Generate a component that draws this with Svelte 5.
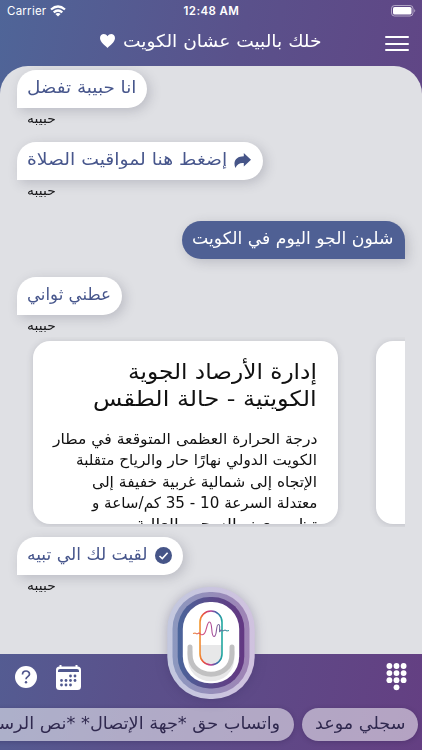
<script lang="ts">
	type Line = { text: string; width: number };
	type Message = Line & { icon?: 'share' | 'check' };

	const sender = 'حبيبه';
	const greetings: Message[] = [
		{ text: 'انا حبيبة تفضل', width: 109 },
		{ text: 'إضغط هنا لمواقيت الصلاة', width: 200, icon: 'share' }
	];
	const question: Line = { text: 'شلون الجو اليوم في الكويت', width: 202 };
	const waiting: Message = { text: 'عطني ثواني', width: 84 };
	const found: Message = { text: 'لقيت لك الي تبيه', width: 121, icon: 'check' };

	const title: Line[] = [
		{ text: 'إدارة الأرصاد الجوية', width: 189 },
		{ text: 'الكويتية - حالة الطقس', width: 224 }
	];
	const forecast: Line[] = [
		{ text: 'درجة الحرارة العظمى المتوقعة في مطار', width: 264 },
		{ text: 'الكويت الدولي نهارًا حار والرياح متقلبة', width: 241 },
		{ text: 'الإتجاه إلى شمالية غربية خفيفة إلى', width: 225 },
		{ text: 'معتدلة السرعة 10 - 35 كم/ساعة و', width: 225 },
		{ text: 'تظهر بعض السحب العالية', width: 181 }
	];
	const suggestions: Line[] = [
		{ text: 'سجلي موعد', width: 90 },
		{ text: 'واتساب حق *جهة الإتصال* *نص الرسالة*', width: 310 }
	];

	const keypad = [0, 1, 2, 3, 4, 5, 6, 7, 8].map((i) => [3.4 + (i % 3) * 7.1, 3 + Math.floor(i / 3) * 7.1]).concat([[10.5, 24.3]]);
	const days = [[14.5, 11], [19, 11], [5.5, 15.5], [10, 15.5], [14.5, 15.5], [19, 15.5], [5.5, 20], [10, 20], [14.5, 20]];

	// stretch a line to its column width, anchored on the right edge
	function fit(el: HTMLElement, width: number) {
		const natural = el.offsetWidth;
		el.style.transform = `scaleX(${width / natural})`;
		el.style.marginLeft = `${width - natural}px`;
	}
</script>

{#snippet bubble(msg: Message)}
	<div class="message">
		<div class="bubble">
			{#if msg.icon === 'share'}
				<svg class="share" viewBox="0 0 17 15" width="17" height="15">
					<path d="M9.8 0L17 6.7L9.8 13.4V10C6 9.6 3.2 10.8 1.4 15C-1.6 7.5 3 3.4 9.8 3.3Z" />
				</svg>
			{:else if msg.icon === 'check'}
				<svg class="check" viewBox="0 0 17 17" width="17" height="17">
					<circle cx="8.5" cy="8.5" r="8.5" />
					<path d="M4.5 9L7.3 11.6L12.6 5.7" fill="none" stroke="#fff" stroke-width="1.6" />
				</svg>
			{/if}
			<span class="line" use:fit={msg.width}>{msg.text}</span>
		</div>
		<div class="sender"><span class="line" use:fit={29}>{sender}</span></div>
	</div>
{/snippet}

<div class="phone">
	<div class="status">
		<div class="carrier">
			Carrier
			<svg viewBox="0 0 16 12" width="16" height="12" fill="none" stroke="#fff" stroke-width="2.3">
				<path d="M1 4.5Q8 -1.5 15 4.5M3.7 7.4Q8 3.6 12.3 7.4" />
				<path d="M8 11.6L5.4 9Q8 7 10.6 9Z" fill="#fff" stroke="none" />
			</svg>
		</div>
		<div class="time">12:48 AM</div>
		<svg class="battery" viewBox="0 0 25 12" width="25" height="12">
			<rect x=".5" y=".5" width="21.5" height="10.5" rx="3" fill="none" stroke="#fff" stroke-opacity=".5" />
			<rect x="2" y="2" width="18.5" height="7.5" rx="1.6" fill="#fff" />
			<path d="M23.3 4Q25.2 5.8 23.3 7.5Z" fill="#fff" fill-opacity=".6" />
		</svg>
	</div>

	<header>
		<h1>
			<span class="line" use:fit={199}>خلك بالبيت عشان الكويت</span>
			<svg viewBox="0 0 15 14" width="15" height="14">
				<path d="M7.5 14C5.5 12 0 8.2 0 4.1C0-.2 5.3-1.4 7.5 2.2C9.7-1.4 15-.2 15 4.1C15 8.2 9.5 12 7.5 14Z" fill="#fff" />
			</svg>
		</h1>
		<button class="menu" aria-label="القائمة"><i></i><i></i><i></i></button>
	</header>

	<main>
		{#each greetings as msg}
			{@render bubble(msg)}
		{/each}
		<div class="bubble mine"><span class="line" use:fit={question.width}>{question.text}</span></div>
		{@render bubble(waiting)}

		<div class="cards">
			<article>
				<h2>{#each title as line}<span class="line" use:fit={line.width}>{line.text}</span>{/each}</h2>
				<p>{#each forecast as line}<span class="line" use:fit={line.width}>{line.text}</span>{/each}</p>
			</article>
			<article></article>
		</div>

		{@render bubble(found)}
	</main>

	<footer>
		<div class="tools">
			<svg viewBox="0 0 22 22" width="22" height="22">
				<circle cx="11" cy="11" r="11" fill="#fff" />
				<path d="M7.5 8.5C7.5 3.8 14.6 4 14.5 8.2C14.4 10.7 11 10.5 11 13.2" fill="none" stroke="#4f558c" stroke-width="1.7" />
				<circle cx="11" cy="16.2" r="1.2" fill="#4f558c" />
			</svg>
			<svg viewBox="0 0 25 25" width="25" height="25">
				<rect y="1.5" width="25" height="23.5" rx="3.5" fill="#fff" />
				<path d="M4.5 0V3M20.5 0V3" stroke="#fff" stroke-width="2" />
				<path d="M2 7V5.5Q2 4 4 4H21Q23 4 23 5.5V7Z" fill="#50588f" />
				{#each days as [x, y]}
					<circle cx={x} cy={y} r="1.4" fill="#50588f" />
				{/each}
			</svg>
			<svg class="keypad" viewBox="0 0 21 28" width="21" height="28">
				{#each keypad as [x, y]}
					<circle cx={x} cy={y} r="2.9" fill="#fff" />
				{/each}
			</svg>
		</div>
		<div class="suggestions">
			{#each suggestions as item}
				<button><span class="line" use:fit={item.width}>{item.text}</span></button>
			{/each}
		</div>
	</footer>

	<button class="mic" aria-label="تحدث">
		<svg viewBox="0 0 88 112" width="88" height="112">
			<defs>
				<linearGradient id="ring" x1="0" x2="1">
					<stop offset="0" stop-color="#4a659b" />
					<stop offset=".5" stop-color="#5a4b8b" />
					<stop offset="1" stop-color="#633782" />
				</linearGradient>
				<linearGradient id="halo" x1="0" x2="1">
					<stop offset="0" stop-color="#c3c8df" />
					<stop offset="1" stop-color="#d0c2df" />
				</linearGradient>
				<linearGradient id="halo2" x1="0" x2="1">
					<stop offset="0" stop-color="#8c98bf" />
					<stop offset="1" stop-color="#9f83b5" />
				</linearGradient>
				<linearGradient id="rainbow" gradientUnits="userSpaceOnUse" x1="32" y1="0" x2="55" y2="0">
					<stop offset="0" stop-color="#f3a02c" />
					<stop offset=".2" stop-color="#e94b3c" />
					<stop offset=".5" stop-color="#ba3f93" />
					<stop offset=".75" stop-color="#455fac" />
					<stop offset="1" stop-color="#20a99f" />
				</linearGradient>
				<linearGradient id="wave" gradientUnits="userSpaceOnUse" x1="26" y1="0" x2="62" y2="0">
					<stop offset="0" stop-color="#ef8b35" />
					<stop offset=".25" stop-color="#d84c78" />
					<stop offset=".55" stop-color="#a64b9a" />
					<stop offset="1" stop-color="#259b9d" />
				</linearGradient>
			</defs>
			<rect x=".3" y="0" width="87.4" height="112" rx="42" fill="url(#halo)" />
			<rect x="5.5" y="5" width="77" height="102" rx="37" fill="url(#halo2)" />
			<rect x="10.7" y="10" width="66.6" height="91.5" rx="32" fill="url(#ring)" />
			<rect x="15.8" y="15" width="56.4" height="81.3" rx="27" fill="#fff" />
			<path d="M23 65V70C23 99 65 99 65 70V65" fill="none" stroke="#e7e7e8" stroke-width="5" stroke-linecap="round" />
			<path d="M23 60V67C23 94 65 94 65 67V60" fill="none" stroke="#c1c1c2" stroke-width="5" stroke-linecap="round" />
			<path d="M33 58H55V67Q55 78 44 78T33 67Z" fill="#e8e8e9" />
			<rect x="33" y="24" width="22" height="54" rx="11" fill="none" stroke="url(#rainbow)" stroke-width="1.6" />
			<path d="M26 46.5L28 46L30 47L32 46L34 47.5C40 50 39 35 42.5 35S43.5 49.5 47 49.5S48.5 37.5 51.5 37.5S50.5 49 54 43L56 44L58 43L60 44L62 43.5" fill="none" stroke="url(#wave)" stroke-width="1.1" />
		</svg>
	</button>
</div>

<style>
	.phone {
		position: relative;
		display: flex;
		flex-direction: column;
		width: 422px;
		height: 750px;
		overflow: hidden;
		background: linear-gradient(100deg, #4f6598 0%, #5a518b 45%, #643f82 100%);
		font-family: 'DejaVu Sans', sans-serif;
		direction: ltr;
	}

	button {
		border: 0;
		padding: 0;
		background: none;
		font: inherit;
	}

	svg { display: block; flex-shrink: 0; }

	.line {
		display: block;
		flex-shrink: 0;
		width: max-content;
		direction: rtl;
		transform-origin: right;
		white-space: nowrap;
	}

	.status {
		display: grid;
		grid-template-columns: 1fr auto 1fr;
		align-items: center;
		height: 22px;
		padding: 0 6px 0 7px;
		box-sizing: border-box;
		color: #fff;
		font: 11.5px Inter, sans-serif;
	}

	.carrier {
		display: flex;
		align-items: center;
		gap: 4px;
		letter-spacing: 0.25px;
	}

	.time {
		font-weight: 600;
		letter-spacing: 0.4px;
	}

	.battery { justify-self: end; }

	header {
		display: flex;
		justify-content: space-between;
		height: 44px;
		padding: 0 13px 0 100px;
	}

	h1 {
		display: flex;
		flex-direction: row-reverse;
		align-items: center;
		justify-content: space-between;
		width: 222px;
		height: 38px;
		margin: 0;
		color: #fff;
		font-size: 17.5px;
		font-weight: 400;
	}

	.menu {
		display: flex;
		flex-direction: column;
		justify-content: space-between;
		width: 24px;
		height: 15px;
		margin-top: 14px;
	}

	.menu i {
		height: 2px;
		border-radius: 1px;
		background: #fff;
	}

	main {
		display: flex;
		flex-direction: column;
		height: 588px;
		padding: 4px 17px 0;
		box-sizing: border-box;
		border-radius: 28px 28px 0 0;
		background: #dfe0e4;
		overflow: hidden;
	}

	.message {
		flex-shrink: 0;
		height: 72px;
	}

	.bubble {
		display: flex;
		flex-direction: row-reverse;
		align-items: center;
		gap: 7px;
		width: max-content;
		height: 38px;
		padding: 0 11px 4px 10px;
		box-sizing: border-box;
		border-radius: 19px 19px 19px 0;
		background: #fff;
		box-shadow: 3px 3px 12px rgba(60, 60, 80, 0.22);
		color: #47568c;
		font-size: 17px;
	}

	.bubble svg { fill: #465588; margin-top: 3px; }
	.bubble .share { margin-right: 1px; }

	.sender {
		display: flex;
		padding-left: 10px;
		color: #17171a;
		font-size: 13.5px;
		line-height: 20px;
	}

	.mine {
		align-self: flex-end;
		flex-shrink: 0;
		margin: 7px 0 18px;
		border-radius: 19px 19px 0 19px;
		background: #4f6094;
		color: #fff;
	}

	.cards {
		display: flex;
		flex-shrink: 0;
		gap: 38px;
		height: 190px;
		margin: -12px 0 10px;
		padding: 4px 0 0 16px;
		box-sizing: border-box;
		overflow: hidden;
	}

	article {
		flex: 0 0 305px;
		height: 183px;
		padding: 17px 21px 0;
		box-sizing: border-box;
		border-radius: 17px;
		background: #fff;
		box-shadow: 0 1px 7px rgba(60, 60, 80, 0.2);
		color: #111;
		direction: rtl;
		overflow: hidden;
	}

	h2 {
		margin: 0 0 17px;
		font-size: 21.5px;
		font-weight: 400;
		line-height: 27px;
	}

	p {
		margin: 0;
		font-size: 15px;
		line-height: 21.3px;
	}

	footer {
		height: 96px;
		box-sizing: border-box;
		padding-top: 9px;
	}

	.tools {
		display: flex;
		align-items: center;
		gap: 19px;
		height: 28px;
		padding: 0 15px;
	}

	.keypad { margin-left: auto; }

	.suggestions {
		display: flex;
		gap: 8px;
		margin-top: 17px;
		padding: 0 4px;
		direction: rtl;
	}

	.suggestions button {
		flex-shrink: 0;
		height: 33px;
		padding: 0 13px 4px;
		border-radius: 17px;
		background: rgba(255, 255, 255, 0.52);
		box-shadow: 0 1px 5px rgba(30, 20, 60, 0.25);
		color: #30294f;
		font-size: 17px;
	}

	.mic {
		position: absolute;
		left: 167px;
		top: 587px;
		filter: drop-shadow(0 1px 6px rgba(50, 40, 90, 0.3));
	}
</style>
